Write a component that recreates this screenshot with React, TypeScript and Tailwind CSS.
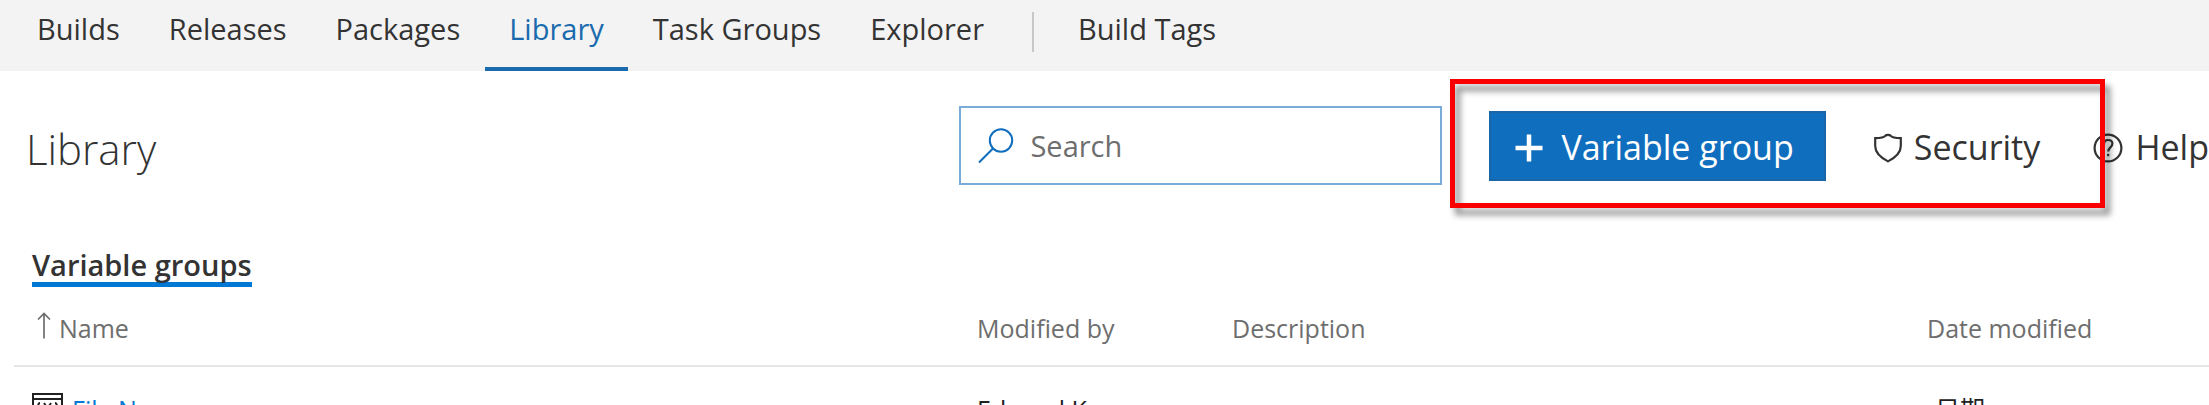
const tabs = ["Builds", "Releases", "Packages", "Library", "Task Groups", "Explorer"];

function SearchIcon() {
  return (
    <svg viewBox="0 0 36 36" className="size-9 shrink-0 text-[#106ebe]" fill="none" stroke="currentColor" strokeWidth="2" aria-hidden="true">
      <circle cx="23" cy="12.5" r="11.2" />
      <path d="M15.2 20.3 1 34.5" />
    </svg>
  );
}

function PlusIcon() {
  return (
    <svg viewBox="0 0 28 28" className="size-7 shrink-0" fill="none" stroke="currentColor" strokeWidth="4.5" aria-hidden="true">
      <path d="M14 0.5V27.5M0.5 14H27.5" />
    </svg>
  );
}

function ShieldIcon() {
  return (
    <svg viewBox="0 0 28 30" className="h-[30px] w-7 shrink-0" fill="none" stroke="currentColor" strokeWidth="2.2" aria-hidden="true">
      <path d="M1.2 5.2C6 5.2 10 4.6 11.5 2.6C12.5 1.6 15.5 1.6 16.5 2.6C18 4.6 22 5.2 26.8 5.2V13C26.8 20 20.5 25 14 28.4C7.5 25 1.2 20 1.2 13Z" />
    </svg>
  );
}

function HelpIcon() {
  return (
    <svg viewBox="0 0 30 30" className="h-[30px] w-[30px] shrink-0" fill="none" stroke="currentColor" strokeWidth="2.2" aria-hidden="true">
      <circle cx="15" cy="15" r="13.4" />
      <path d="M11 11.2C11 8.4 12.8 7 15.2 7S19.4 8.5 19.4 10.8C19.4 14.2 15.2 14.6 15.2 18.5" />
      <path d="M15.2 20.8V23.2" />
    </svg>
  );
}

function SortArrow() {
  return (
    <svg viewBox="0 0 14 27" className="h-[27px] w-[14px] shrink-0" fill="none" stroke="currentColor" strokeWidth="1.7" aria-hidden="true">
      <path d="M7 1.5V26.5M1 7.5 7 1.5 13 7.5" />
    </svg>
  );
}

function GroupIcon() {
  return (
    <svg viewBox="0 0 32 28" className="h-7 w-8 shrink-0 text-[#212121]" fill="none" stroke="currentColor" strokeWidth="2" aria-hidden="true">
      <path d="M1 1H30V27H1ZM1 6H30" />
      <path d="M8 10C5 10 7 15 4.5 17C7 19 5 23 8 23M23 10C26 10 24 15 26.5 17C24 19 26 23 23 23M12 10 19 21M19 10 12 21" />
    </svg>
  );
}

export default function App() {
  return (
    <div className="h-screen overflow-hidden bg-white font-['Open_Sans','Noto_Sans_CJK_SC',sans-serif] text-[#333333]">
      <nav className="flex h-[71px] items-stretch bg-[#f3f3f3] pl-3 text-[29px] leading-[38px]">
        {tabs.map((tab) => (
          <a
            key={tab}
            href="#"
            aria-current={tab === "Library" ? "page" : undefined}
            className={
              tab === "Library"
                ? "ml-px border-b-4 border-[#1a6aae] px-6 pt-[10px] text-[#1a6aae]"
                : "ml-px px-6 pt-[10px]"
            }
          >
            {tab}
          </a>
        ))}
        <span className="mt-3 ml-6 h-10 w-[2px] bg-[#c8c8c8]" />
        <a href="#" className="ml-5 px-6 pt-[10px]">Build Tags</a>
      </nav>

      <header className="flex items-center pt-[35px] pl-[26px]">
        <h1 className="pt-1.5 text-[42px] leading-[60px] font-light">Library</h1>
        <label className="ml-auto flex h-[79px] w-[483px] items-center gap-4 border-2 border-[#7aaad8] pl-[17px]">
          <SearchIcon />
          <span className="sr-only">Search</span>
          <input
            type="text"
            placeholder="Search"
            className="min-w-0 flex-1 text-[29px] outline-none placeholder:text-[#6e6e6e]"
          />
        </label>
        <div className="relative ml-2 flex h-[79px] w-[655px] items-center gap-12 pl-[39px] text-[34px]">
          <button className="flex h-[70px] items-center gap-[18px] border-2 border-[#1a66a8] bg-[#106ebe] pt-1 pr-[30px] pl-6 text-white">
            <PlusIcon />
            Variable group
          </button>
          <button className="flex items-center gap-3 pt-1">
            <ShieldIcon />
            Security
          </button>
          <div className="pointer-events-none absolute inset-x-0 -top-[27px] -bottom-[23px] z-10 border-5 border-[#fa0000] drop-shadow-[5px_7px_3px_rgba(0,0,0,0.45)]" />
        </div>
        <button className="-ml-3 flex items-center gap-3 pt-1 text-[34px]">
          <HelpIcon />
          Help
        </button>
      </header>

      <main className="pt-[60px] pl-[14px]">
        <h2 className="ml-[18px] h-[42px] w-fit border-b-5 border-[#0078d4] text-[29px] leading-[40px] font-semibold">
          Variable groups
        </h2>
        <table className="w-full table-fixed text-left text-[25px] leading-8">
          <colgroup>
            <col className="w-[963px]" />
            <col className="w-[255px]" />
            <col className="w-[695px]" />
            <col />
          </colgroup>
          <thead className="h-[79px] border-b-2 border-[#e6e6e6] text-[#6e6e6e]">
            <tr>
              <th className="pt-1 pl-[23px] font-normal">
                <span className="flex items-start gap-2">
                  <SortArrow />
                  Name
                </span>
              </th>
              <th className="pt-1 font-normal">Modified by</th>
              <th className="pt-1 font-normal">Description</th>
              <th className="pt-1 font-normal">Date modified</th>
            </tr>
          </thead>
          <tbody>
            <tr>
              <td className="pt-[26px] pl-[18px]">
                <a href="#" className="flex items-start gap-2 text-[#0078d4]">
                  <GroupIcon />
                  File Name
                </a>
              </td>
              <td className="pt-[26px] text-[#212121]">Edward K</td>
              <td />
              <td className="pt-[26px] pl-2 text-[#212121]">日期</td>
            </tr>
          </tbody>
        </table>
      </main>
    </div>
  );
}
